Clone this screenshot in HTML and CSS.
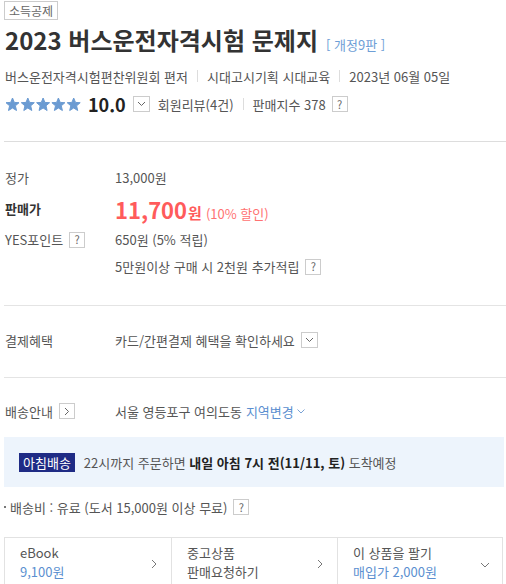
FILE: index.html
```html
<!DOCTYPE html>
<html lang="ko">
<head>
<meta charset="utf-8">
<link rel="stylesheet" href="styles.css">
</head>
<body>
<div class="page">
  <span class="tag">소득공제</span>
  <div class="title-row">
    <h1 class="title">2023 버스운전자격시험 문제지</h1>
    <span class="edition">[ 개정9판 ]</span>
  </div>
  <div class="byline">
    <span>버스운전자격시험편찬위원회 편저</span>
    <span class="sep"></span>
    <span>시대고시기획 시대교육</span>
    <span class="sep"></span>
    <span>2023년 06월 05일</span>
  </div>
  <div class="rating">
    <svg class="stars" width="77" height="15" viewBox="0 0 77 15">
      <g fill="#6b9bd2" stroke="#6b9bd2" stroke-width="1" stroke-linejoin="round">
        <polygon points="7.5,1 9.3,5.4 14,5.7 10.4,8.8 11.5,13.5 7.5,11 3.5,13.5 4.6,8.8 1,5.7 5.7,5.4"/>
        <polygon transform="translate(15.3 0)" points="7.5,1 9.3,5.4 14,5.7 10.4,8.8 11.5,13.5 7.5,11 3.5,13.5 4.6,8.8 1,5.7 5.7,5.4"/>
        <polygon transform="translate(30.6 0)" points="7.5,1 9.3,5.4 14,5.7 10.4,8.8 11.5,13.5 7.5,11 3.5,13.5 4.6,8.8 1,5.7 5.7,5.4"/>
        <polygon transform="translate(45.9 0)" points="7.5,1 9.3,5.4 14,5.7 10.4,8.8 11.5,13.5 7.5,11 3.5,13.5 4.6,8.8 1,5.7 5.7,5.4"/>
        <polygon transform="translate(61.2 0)" points="7.5,1 9.3,5.4 14,5.7 10.4,8.8 11.5,13.5 7.5,11 3.5,13.5 4.6,8.8 1,5.7 5.7,5.4"/>
      </g>
    </svg>
    <span class="score">10.0</span>
    <span class="ibox ibox-dd"><svg width="9" height="6" viewBox="0 0 9 6"><polyline points="1,1 4.5,4.5 8,1" fill="none" stroke="#666" stroke-width="1"/></svg></span>
    <span class="review">회원리뷰(4건)</span>
    <span class="sep"></span>
    <span>판매지수 378</span>
    <span class="ibox q">?</span>
  </div>
  <div class="rule"></div>

  <div class="prices">
    <div class="row r31">
      <span class="label">정가</span>
      <span class="val">13,000원</span>
    </div>
    <div class="row r31">
      <span class="label strong">판매가</span>
      <span class="val price"><b class="big">11,700</b><b class="won">원</b><span class="disc">(10% 할인)</span></span>
    </div>
    <div class="row r31">
      <span class="label">YES포인트<span class="ibox q ml">?</span></span>
      <span class="val">650원 (5% 적립)</span>
    </div>
    <div class="row r23">
      <span class="label"></span>
      <span class="val">5만원이상 구매 시 2천원 추가적립<span class="ibox q ml">?</span></span>
    </div>
  </div>
  <div class="rule r2"></div>

  <div class="row r24 pay">
    <span class="label">결제혜택</span>
    <span class="val">카드/간편결제 혜택을 확인하세요<span class="ibox ibox-dd ml"><svg width="9" height="6" viewBox="0 0 9 6"><polyline points="1,1 4.5,4.5 8,1" fill="none" stroke="#666" stroke-width="1"/></svg></span></span>
  </div>
  <div class="rule r3"></div>

  <div class="row r24 ship">
    <span class="label">배송안내<span class="ibox ml"><svg width="6" height="9" viewBox="0 0 6 9"><polyline points="1,1 4.5,4.5 1,8" fill="none" stroke="#666" stroke-width="1"/></svg></span></span>
    <span class="val"><span>서울 영등포구 여의도동</span><span class="blue gap">지역변경</span><svg class="dd" width="8" height="5" viewBox="0 0 8 5"><polyline points="0.5,0.5 4,4 7.5,0.5" fill="none" stroke="#7aa3d6" stroke-width="1"/></svg></span>
  </div>

  <div class="morning">
    <span class="badge">아침배송</span>
    <span>22시까지 주문하면 <b>내일 아침 7시 전(11/11, 토)</b> 도착예정</span>
  </div>

  <div class="fee">
    <span class="dot"></span>
    <span>배송비 : 유료 (도서 15,000원 이상 무료)</span>
    <span class="ibox q ml">?</span>
  </div>

  <div class="cards">
    <div class="card">
      <div class="card-text"><div>eBook</div><div class="blue">9,100원</div></div>
      <svg width="6" height="10" viewBox="0 0 6 10"><polyline points="1,1 5,5 1,9" fill="none" stroke="#777" stroke-width="1"/></svg>
    </div>
    <div class="card">
      <div class="card-text"><div>중고상품</div><div>판매요청하기</div></div>
      <svg width="6" height="10" viewBox="0 0 6 10"><polyline points="1,1 5,5 1,9" fill="none" stroke="#777" stroke-width="1"/></svg>
    </div>
    <div class="card">
      <div class="card-text"><div>이 상품을 팔기</div><div class="blue">매입가 2,000원</div></div>
      <svg width="10" height="6" viewBox="0 0 10 6"><polyline points="1,1 5,5 9,1" fill="none" stroke="#777" stroke-width="1"/></svg>
    </div>
  </div>
</div>
</body>
</html>
```

FILE: styles.css
```css
* { box-sizing: border-box; }
html, body { margin: 0; padding: 0; background: #fff; }
body {
  font-family: "Noto Sans CJK KR", "Noto Sans", sans-serif;
  font-size: 13px;
  color: #555;
  overflow: hidden;
}
.page { padding: 1px 0 0 4px; }

.tag {
  display: inline-block;
  height: 19px;
  line-height: 17px;
  padding: 0 4px;
  border: 1px solid #ccc;
  font-size: 12px;
  color: #666;
}

.title-row {
  display: flex;
  align-items: baseline;
  margin-top: 4px;
  padding-left: 1px;
  height: 32px;
}
.title {
  margin: 0;
  font-size: 24px;
  line-height: 32px;
  font-weight: 700;
  color: #333;
}
.edition {
  margin-left: 8px;
  font-size: 13px;
  color: #6d9ed6;
}

.byline, .rating {
  display: flex;
  align-items: center;
  padding-left: 1px;
  color: #555;
}
.byline { margin-top: 10px; height: 20px; }
.sep {
  display: inline-block;
  width: 1px;
  height: 12px;
  background: #ddd;
  margin: 0 9px;
}
.rating { margin-top: 6px; height: 24px; }
.stars { display: block; margin-right: 6px; }
.score {
  font-size: 18px;
  font-weight: 700;
  color: #222;
  margin-right: 7px;
}
.review { margin-left: 8px; }

.ibox {
  display: inline-flex;
  align-items: center;
  justify-content: center;
  width: 16px;
  height: 16px;
  border: 1px solid #ccc;
  background: #fff;
  vertical-align: middle;
  flex-shrink: 0;
}
.ibox-dd { width: 17px; }
.q { font-size: 11px; color: #666; line-height: 1; }
.rating .q { margin-left: 6px; }
.ml { margin-left: 6px; }

.rule { height: 1px; background: #ddd; margin: 25px -2px 0 0; }
.rule.r2 { margin-top: 27px; background: #e4e4e4; }
.rule.r3 { margin-top: 25px; background: #e4e4e4; }

.prices { margin-top: 20px; }
.row {
  display: flex;
  align-items: center;
  padding-left: 1px;
}
.r31 { height: 31px; }
.r23 { height: 23px; }
.r24 { height: 24px; }
.label {
  width: 110px;
  display: flex;
  align-items: center;
  color: #555;
}
.label.strong { font-weight: 700; color: #333; }
.val { display: flex; align-items: center; color: #555; }
.price { align-items: baseline; }
.big { font-size: 22px; color: #ff5b5b; font-weight: 700; }
.won { font-size: 15px; color: #ff5b5b; font-weight: 700; margin-left: 1px; }
.disc { color: #ff7272; margin-left: 4px; }

.pay { margin-top: 22px; }
.ship { margin-top: 21px; }
.blue { color: #5b8fd0; }
.gap { margin-left: 4px; }
.dd { margin-left: 3px; }

.morning {
  display: flex;
  align-items: center;
  height: 50px;
  margin: 14px 2px 0 0;
  padding-left: 15px;
  background: #edf4fc;
  color: #555;
}
.morning b { color: #222; font-weight: 700; }
.badge {
  display: inline-block;
  height: 19px;
  line-height: 19px;
  padding: 0 4px;
  background: #1f2b85;
  color: #fff;
  margin-right: 9px;
}

.fee {
  display: flex;
  align-items: center;
  height: 20px;
  margin-top: 10px;
}
.dot {
  width: 2px; height: 2px; background: #777;
  margin: 0 4px 0 0;
}

.cards {
  display: grid;
  grid-template-columns: 166px 166px 167px;
  margin: 20px 3px 0 0;
  border: 1px solid #e2e2e2;
  border-bottom: none;
  height: 60px;
}
.card {
  display: flex;
  justify-content: space-between;
  align-items: flex-start;
  padding: 5px 14px 0 15px;
  line-height: 19px;
  color: #555;
}
.card + .card { border-left: 1px solid #e2e2e2; }
.card svg { margin-top: 16px; }
.card:last-child svg { margin-top: 19px; }
```
